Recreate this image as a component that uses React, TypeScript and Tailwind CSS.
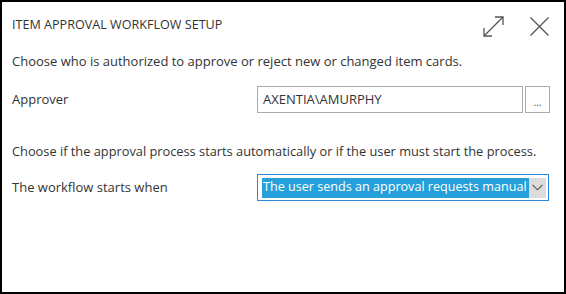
export default function App() {
  return (
    <div className="w-[566px] h-[294px] bg-white border-2 border-black text-[13px] text-[#333] font-['Open_Sans',sans-serif] overflow-hidden">
      <div className="h-[46px] flex items-center justify-between pl-[10px] pr-[15px]">
        <span className="text-[12.6px] text-[#333]">ITEM APPROVAL WORKFLOW SETUP</span>
        <div className="flex items-center gap-[26px] pt-[2px]">
          <svg width="21" height="21" viewBox="0 0 21 21" fill="none" stroke="#555" strokeWidth="1.3">
            <path d="M1 20 L20 1" />
            <path d="M12 1 H20 V9" />
            <path d="M1 12 V20 H9" />
          </svg>
          <svg width="19" height="19" viewBox="0 0 19 19" fill="none" stroke="#555" strokeWidth="1.3">
            <path d="M0.5 0.5 L18.5 18.5" />
            <path d="M18.5 0.5 L0.5 18.5" />
          </svg>
        </div>
      </div>

      <p className="mt-[3px] pl-[10px] leading-[20px]">
        Choose who is authorized to approve or reject new or changed item cards.
      </p>

      <div className="mt-[15px] flex items-center pl-[10px]">
        <span className="w-[245px]">Approver</span>
        <div className="w-[266px] h-[27px] border border-[#ababab] flex items-center pl-[5px] text-[#333]">
          AXENTIA\AMURPHY
        </div>
        <button className="ml-[2px] w-[25px] h-[27px] border border-[#ababab] flex items-center justify-center text-[10px] leading-none pt-[5px] text-[#444]">
          ...
        </button>
      </div>

      <p className="mt-[28px] pl-[10px] leading-[20px] text-[12.8px]">
        Choose if the approval process starts automatically or if the user must start the process.
      </p>

      <div className="mt-[13px] flex items-center pl-[10px]">
        <span className="w-[245px]">The workflow starts when</span>
        <div className="w-[292px] h-[27px] border border-[#2b88d8] flex items-center pl-[4px] pr-[2px]">
          <div className="w-[266px] h-[20px] flex items-center">
            <span className="h-[20px] bg-[#26a0da] text-white text-[12.6px] flex items-center pl-[1px] pr-[3px] whitespace-nowrap">
              The user sends an approval requests manual
            </span>
          </div>
          <div className="ml-[1px] w-[17px] h-[20px] bg-[#dcdcdc] flex items-center justify-center">
            <svg width="11" height="7" viewBox="0 0 11 7" fill="none" stroke="#555" strokeWidth="1.1">
              <path d="M0.5 0.8 L5.5 5.8 L10.5 0.8" />
            </svg>
          </div>
        </div>
      </div>
    </div>
  );
}
